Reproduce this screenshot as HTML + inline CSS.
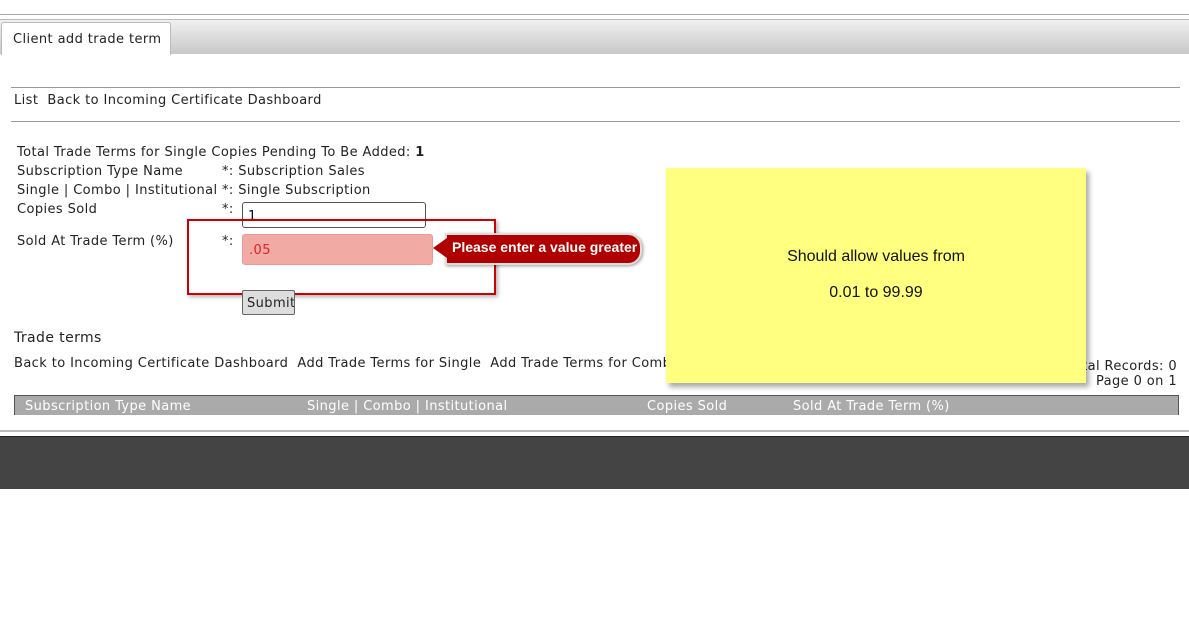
<!DOCTYPE html>
<html><head><meta charset="utf-8"><style>
body{margin:0;width:1189px;height:643px;background:#fff;font-family:"DejaVu Sans","Liberation Sans",sans-serif;font-size:13px;letter-spacing:0.4px;color:#222;position:relative;overflow:hidden}
.a{position:absolute;white-space:nowrap}
.t{margin-top:1px}
</style></head><body>
<div class="a" style="left:0;top:14px;width:1189px;height:1px;background:#aaa"></div>
<div class="a" style="left:0;top:19px;width:1189px;height:34px;background:linear-gradient(#f0f0f0,#c8c8c8);border-top:1px solid #bbb"></div>
<div class="a" style="left:1px;top:22px;width:168px;height:32px;background:#fff;border:1px solid #bbb;border-bottom:none;border-radius:3px 3px 0 0"></div>
<div class="a" style="left:13px;top:32px">Client add trade term</div>
<div class="a" style="left:11px;top:87px;width:1169px;height:1px;background:#999"></div>
<div class="a" style="left:14px;top:93px">List&nbsp; Back to Incoming Certificate Dashboard</div>
<div class="a" style="left:11px;top:121px;width:1169px;height:1px;background:#999"></div>
<div class="a" style="left:17px;top:145px">Total Trade Terms for Single Copies Pending To Be Added: <b>1</b></div>
<div class="a" style="left:17px;top:164px">Subscription Type Name</div>
<div class="a" style="left:17px;top:183px">Single | Combo | Institutional</div>
<div class="a" style="left:17px;top:202px">Copies Sold</div>
<div class="a" style="left:17px;top:234px">Sold At Trade Term (%)</div>
<div class="a" style="left:222px;top:164px">*: Subscription Sales</div>
<div class="a" style="left:222px;top:183px">*: Single Subscription</div>
<div class="a" style="left:222px;top:202px">*:</div>
<div class="a" style="left:222px;top:234px">*:</div>
<div class="a" style="left:242px;top:202px;width:182px;height:24px;border:1px solid #555;border-radius:3px;background:#fff"><span style="position:absolute;left:5px;top:6px;color:#003">1</span></div>
<div class="a" style="left:242px;top:234px;width:189px;height:29px;border:1px solid #e99;border-radius:3px;background:#f2aaa4"><span style="position:absolute;left:6px;top:8px;color:#d22">.05</span></div>
<div class="a" style="left:187px;top:219px;width:305px;height:72px;border:2px solid #c00;box-shadow:2px 2px 4px rgba(0,0,0,.3)"></div>
<div class="a" style="left:445px;top:233px;width:193px;height:28px;background:#b00000;border:2px solid #ddd;border-radius:0 14px 14px 0;box-shadow:1px 1px 3px rgba(0,0,0,.4)"></div>
<div class="a" style="left:433px;top:238px;width:0;height:0;border-top:10px solid transparent;border-bottom:10px solid transparent;border-right:14px solid #b00000"></div>
<div class="a" style="left:452px;top:239px;color:#fff;font-weight:bold;font-family:'Liberation Sans',sans-serif;font-size:14px;letter-spacing:0;width:188px;overflow:hidden">Please enter a value greater</div>
<div class="a" style="left:242px;top:290px;width:51px;height:23px;background:#ddd;border:1px solid #666;border-radius:2px;overflow:hidden"><span style="position:absolute;left:4px;top:5px">Submit</span></div>
<div class="a" style="left:14px;top:330px;font-size:14px">Trade terms</div>
<div class="a" style="left:14px;top:356px">Back to Incoming Certificate Dashboard&nbsp; Add Trade Terms for Single&nbsp; Add Trade Terms for Combo</div>
<div class="a" style="right:12px;top:359px;text-align:right">Total Records: 0<br>Page 0 on 1</div>
<div class="a" style="left:666px;top:168px;width:420px;height:215px;background:#ffff80;box-shadow:3px 4px 5px rgba(0,0,0,.35)"></div>
<div class="a" style="left:666px;top:239px;width:420px;text-align:center;font-family:'Liberation Sans',sans-serif;font-size:16px;letter-spacing:0;color:#111;line-height:36px;white-space:normal">Should allow values from<br>0.01 to 99.99</div>
<div class="a" style="left:14px;top:395px;width:1163px;height:19px;background:#aaa;border:1px solid #555;border-bottom:none;color:#fff"></div>
<div class="a" style="left:25px;top:399px;color:#fff">Subscription Type Name</div>
<div class="a" style="left:307px;top:399px;color:#fff">Single | Combo | Institutional</div>
<div class="a" style="left:647px;top:399px;color:#fff">Copies Sold</div>
<div class="a" style="left:793px;top:399px;color:#fff">Sold At Trade Term (%)</div>
<div class="a" style="left:0;top:430px;width:1189px;height:2px;background:#bbb"></div>
<div class="a" style="left:0;top:436px;width:1189px;height:52px;background:#444;border-top:1px solid #222"></div>
</body></html>
